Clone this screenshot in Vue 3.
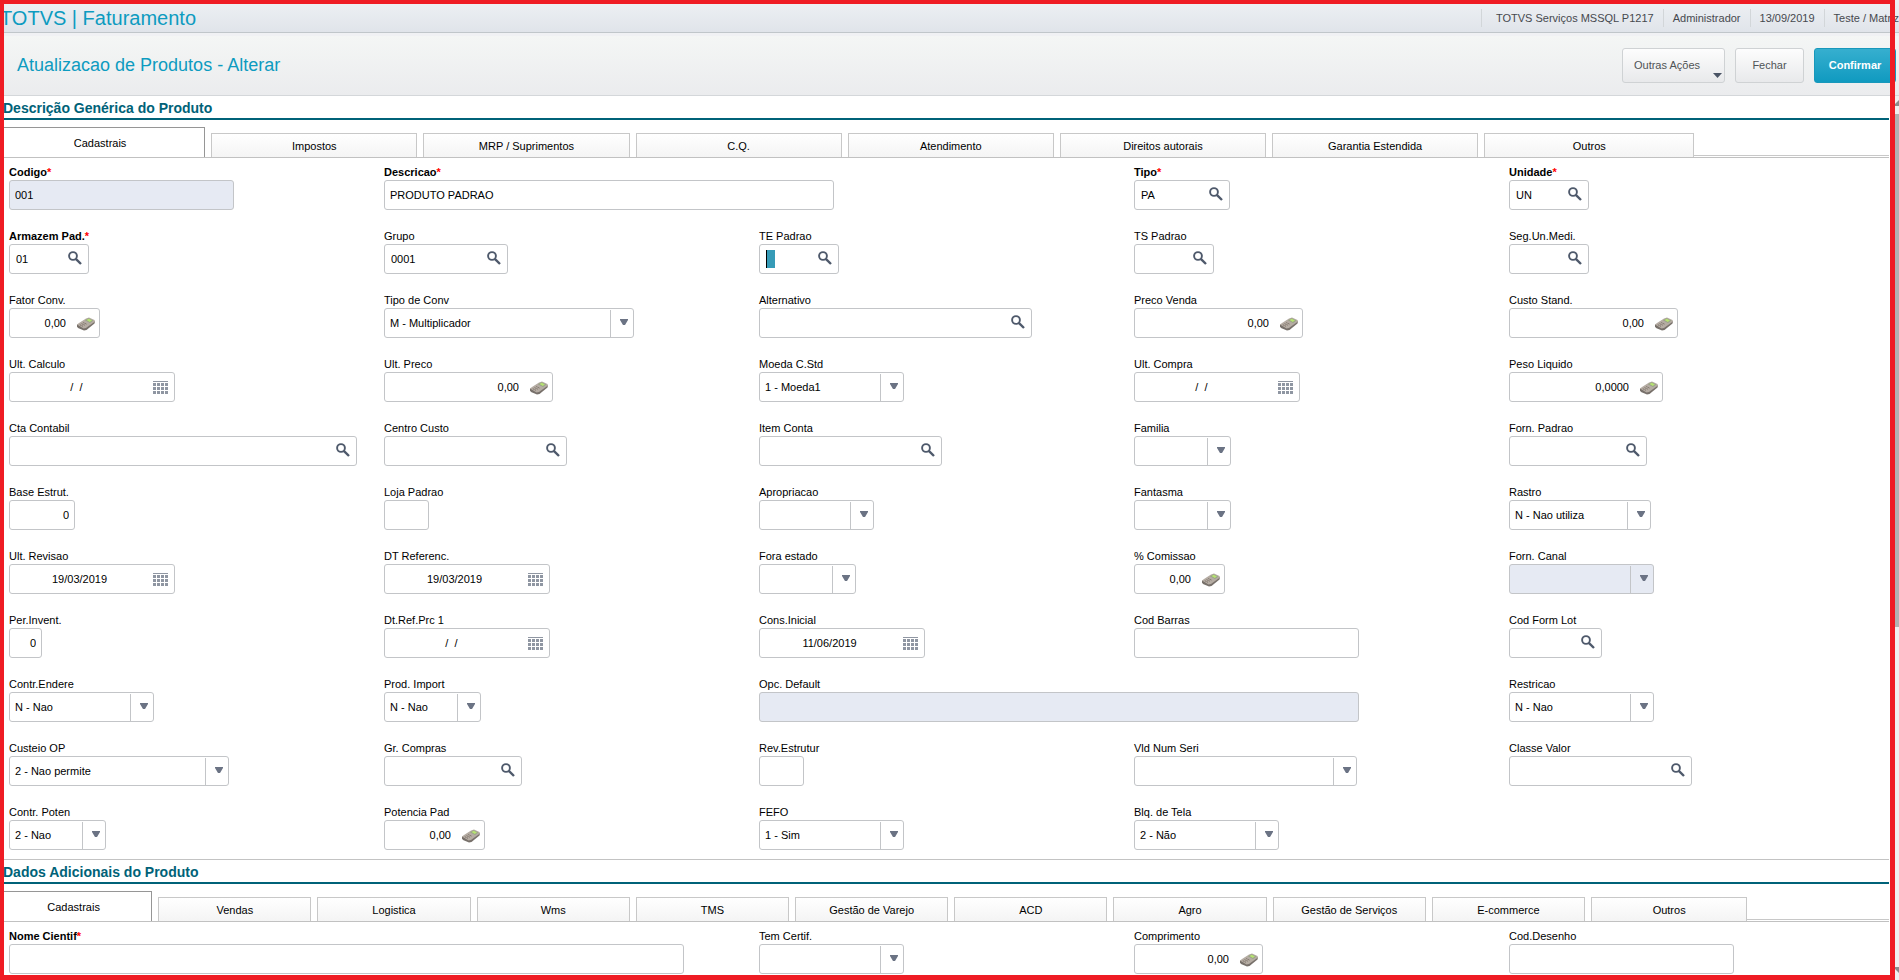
<script setup>
import { ref } from 'vue'

const f = (label, width, kind = 'text', value = '', extra = {}) => ({ label, width, kind, value, ...extra })
const tabs1 = ['Cadastrais', 'Impostos', 'MRP / Suprimentos', 'C.Q.', 'Atendimento', 'Direitos autorais', 'Garantia Estendida', 'Outros']
const tabs2 = ['Cadastrais', 'Vendas', 'Logistica', 'Wms', 'TMS', 'Gestão de Varejo', 'ACD', 'Agro', 'Gestão de Serviços', 'E-commerce', 'Outros']

const req = { required: true }
const emptyDate = '/  /  '
const sections = ref([
  {
    title: 'Descrição Genérica do Produto',
    size: 'wide',
    tabs: tabs1,
    fields: [
      f('Codigo', 225, 'text', '001', { required: true, disabled: true }),
      f('Descricao', 450, 'text', 'PRODUTO PADRAO', { required: true, span: 2 }),
      f('Tipo', 96, 'search', 'PA', req),
      f('Unidade', 80, 'search', 'UN', req),
      f('Armazem Pad.', 80, 'search', '01', req),
      f('Grupo', 124, 'search', '0001'),
      f('TE Padrao', 80, 'search', '', { caret: true }),
      f('TS Padrao', 80, 'search'),
      f('Seg.Un.Medi.', 80, 'search'),
      f('Fator Conv.', 91, 'number', '0,00'),
      f('Tipo de Conv', 250, 'select', 'M - Multiplicador'),
      f('Alternativo', 273, 'search'),
      f('Preco Venda', 169, 'number', '0,00'),
      f('Custo Stand.', 169, 'number', '0,00'),
      f('Ult. Calculo', 166, 'date', emptyDate),
      f('Ult. Preco', 169, 'number', '0,00'),
      f('Moeda C.Std', 145, 'select', '1 - Moeda1'),
      f('Ult. Compra', 166, 'date', emptyDate),
      f('Peso Liquido', 154, 'number', '0,0000'),
      f('Cta Contabil', 348, 'search'),
      f('Centro Custo', 183, 'search'),
      f('Item Conta', 183, 'search'),
      f('Familia', 97, 'select'),
      f('Forn. Padrao', 138, 'search'),
      f('Base Estrut.', 66, 'right', '0'),
      f('Loja Padrao', 45),
      f('Apropriacao', 115, 'select'),
      f('Fantasma', 97, 'select'),
      f('Rastro', 142, 'select', 'N - Nao utiliza'),
      f('Ult. Revisao', 166, 'date', '19/03/2019'),
      f('DT Referenc.', 166, 'date', '19/03/2019'),
      f('Fora estado', 97, 'select'),
      f('% Comissao', 91, 'number', '0,00'),
      f('Forn. Canal', 145, 'select', '', { disabled: true }),
      f('Per.Invent.', 33, 'right', '0'),
      f('Dt.Ref.Prc 1', 166, 'date', emptyDate),
      f('Cons.Inicial', 166, 'date', '11/06/2019'),
      f('Cod Barras', 225),
      f('Cod Form Lot', 93, 'search'),
      f('Contr.Endere', 145, 'select', 'N - Nao'),
      f('Prod. Import', 97, 'select', 'N - Nao'),
      f('Opc. Default', 600, 'text', '', { disabled: true, span: 2 }),
      f('Restricao', 145, 'select', 'N - Nao'),
      f('Custeio OP', 220, 'select', '2 - Nao permite'),
      f('Gr. Compras', 138, 'search'),
      f('Rev.Estrutur', 45),
      f('Vld Num Seri', 223, 'select'),
      f('Classe Valor', 183, 'search'),
      f('Contr. Poten', 97, 'select', '2 - Nao'),
      f('Potencia Pad', 101, 'number', '0,00'),
      f('FEFO', 145, 'select', '1 - Sim'),
      f('Blq. de Tela', 145, 'select', '2 - Não')
    ]
  },
  {
    title: 'Dados Adicionais do Produto',
    size: 'many',
    tabs: tabs2,
    fields: [
      f('Nome Cientif', 675, 'text', '', { required: true, span: 2 }),
      f('Tem Certif.', 145, 'select'),
      f('Comprimento', 129, 'number', '0,00'),
      f('Cod.Desenho', 225)
    ]
  }
])
</script>

<template>
  <div class="window">
    <header class="appbar">
      <div class="brand">TOTVS | Faturamento</div>
      <div class="status">
        <span>TOTVS Serviços MSSQL P1217</span>
        <span>Administrador</span>
        <span>13/09/2019</span>
        <span>Teste / Matriz</span>
      </div>
    </header>
    <div class="toolbar">
      <h1>Atualizacao de Produtos - Alterar</h1>
      <div class="actions">
        <button type="button" class="btn more">Outras Ações
          <svg class="more-arrow" width="9" height="5" viewBox="0 0 9 5"><path d="M0 0h9L4.500 5z" fill="#4a5465" /></svg>
        </button>
        <button type="button" class="btn close">Fechar</button>
        <button type="button" class="btn primary">Confirmar</button>
      </div>
    </div>
    <div class="body">
      <main>
        <section v-for="(s, si) in sections" :key="si">
          <h2>{{ s.title }}</h2>
          <div class="tabrow">
            <div class="tabs" :class="s.size" role="tablist">
              <button v-for="(t, ti) in s.tabs" :key="t" type="button" role="tab" class="tab" :class="{ active: ti === 0 }" :aria-selected="ti === 0">{{ t }}</button>
            </div>
            <div class="filler"></div>
          </div>
          <div class="grid">
            <div v-for="(c, ci) in s.fields" :key="c.label" class="cell" :class="{ two: c.span === 2 }">
              <label :for="`c${si}-${ci}`" :class="{ strong: c.required }">{{ c.label }}<i v-if="c.required">*</i></label>
              <div class="box" :class="[c.kind, { disabled: c.disabled }]" :style="{ width: c.width + 'px' }">
                <select v-if="c.kind === 'select'" :id="`c${si}-${ci}`" :disabled="c.disabled">
                  <option>{{ c.value }}</option>
                </select>
                <input v-else :id="`c${si}-${ci}`" v-model="c.value" type="text" :disabled="c.disabled" :class="{ caret: c.caret }" />
                <span v-if="c.kind === 'select'" class="drop">
                  <svg width="8" height="7" viewBox="0 0 8 7"><path d="M0 0h8v1L5 6H3L0 1z" fill="#6b7384" /></svg>
                </span>
                <svg v-else-if="c.kind === 'search'" class="lens" width="14" height="14" viewBox="0 0 14 14" fill="none">
                  <circle cx="5" cy="5" r="3.900" stroke="#4e596b" stroke-width="1.900" />
                  <path d="M7.800 7.800L13 13" stroke="#4e596b" stroke-width="2.400" />
                </svg>
                <svg v-else-if="c.kind === 'date'" class="cal" width="15" height="13" viewBox="0 0 15 13" fill="#8f96a2">
                  <path d="M0 0h15v1H0zM0 2h3v3H0zM4 2h3v3H4zM8 2h3v3H8zM12 2h3v3h-3zM0 6h3v3H0zM4 6h3v3H4zM8 6h3v3H8zM12 6h3v3h-3zM0 10h3v3H0zM4 10h3v3H4zM8 10h3v3H8zM12 10h3v3h-3z" />
                </svg>
                <svg v-else-if="c.kind === 'number'" class="calc" width="18" height="14" viewBox="0 0 18 14">
                  <path d="M0 7.500v2l1 1.500 6 2.500 2.500-.5L17.500 6.500 18 4z" fill="#77706a" />
                  <path d="M0 7.500L2 6l7-4.500L12 .5l5.500 2.500.5 1.500L9 11l-2.500.5z" fill="#b5aca3" />
                  <path d="M8 3.200L11.500 1.200l4.800 2.300L13 6z" fill="#97a186" />
                  <path d="M9.500 3.100l2.300-1.300 3.200 1.600-2.300 1.500z" fill="#b6e272" />
                  <path d="M2.800 7.700l1.400.7M4.600 8.600l1.400.7M4.500 6.600l1.400.7M6.400 7.500l1.400.7M6.200 5.500l1.400.7M8.100 6.400l1.400.7" stroke="#80756c" stroke-width="1" />
                </svg>
              </div>
            </div>
          </div>
        </section>
      </main>
      <div class="scroll">
        <svg width="12" height="18" viewBox="0 0 12 18"><path d="M0 10L6 4l6 6z" fill="#8c8c8c" /></svg>
        <div class="thumb"></div>
        <svg class="down" width="12" height="18" viewBox="0 0 12 18"><path d="M0 5h12L6 11z" fill="#8c8c8c" /></svg>
      </div>
    </div>
    <div class="frame"></div>
  </div>
</template>

<style>
body {
  margin: 0;
}
</style>

<style scoped>
* {
  box-sizing: border-box;
}
.window {
  position: relative;
  height: 100vh;
  overflow: hidden;
  display: flex;
  flex-direction: column;
  background: #fff;
  color: #000;
  font: 11px/14px 'Liberation Sans', Arial, sans-serif;
}
.frame {
  position: absolute;
  inset: 0 4px 0 0;
  border: solid #ef1c24;
  border-width: 4px 5px 5px 4px;
  pointer-events: none;
}
.appbar {
  flex: none;
  height: 33px;
  display: flex;
  justify-content: space-between;
  align-items: flex-end;
  background: linear-gradient(#eef1f4, #e0e4ea);
  border-bottom: 1px solid #c0c6ca;
}
.brand {
  font-size: 20px;
  line-height: 28px;
  color: #0d9bc0;
}
.status {
  display: flex;
  color: #46494e;
  padding-bottom: 5px;
}
.status span {
  line-height: 18px;
  padding: 0 9px;
  border-left: 1px solid #d2d6d9;
  white-space: nowrap;
}
.status span:first-child {
  padding-left: 14px;
}
.status span:last-child {
  padding-right: 0;
}
.toolbar {
  flex: none;
  height: 63px;
  display: flex;
  justify-content: space-between;
  align-items: center;
  padding: 0 3px 0 17px;
  background: linear-gradient(#f4f6f5, #ebecee);
  border-top: 3px solid #f0f1f4;
  border-bottom: 1px solid #d4d7da;
}
h1 {
  margin: 0;
  padding-bottom: 2px;
  font-size: 18px;
  line-height: 22px;
  font-weight: 400;
  color: #0d9bc0;
}
.actions {
  display: flex;
  gap: 10px;
}
.btn {
  height: 35px;
  padding: 0 0 1px;
  border: 1px solid #cfd2d4;
  border-radius: 3px;
  background: linear-gradient(#fdfdfd, #e8e9eb);
  color: #4f5356;
  font: 11px/14px 'Liberation Sans', Arial, sans-serif;
}
.more {
  position: relative;
  width: 103px;
  padding-right: 13px;
}
.more-arrow {
  position: absolute;
  right: 2px;
  bottom: 4px;
}
.close {
  width: 69px;
}
.primary {
  width: 82px;
  border-color: #1898bb;
  background: linear-gradient(#36afcf, #109ac0);
  color: #fff;
  font-weight: 700;
}
.body {
  flex: 1;
  min-height: 0;
  display: flex;
}
main {
  flex: 1;
  min-width: 0;
  margin-right: 4px;
  overflow: hidden;
}
section + section {
  border-top: 1px solid #c3c3c3;
}
h2 {
  margin: 0;
  height: 24px;
  padding: 4px 0 0 3px;
  border-bottom: 2px solid #006278;
  font-size: 14px;
  line-height: 16px;
  font-weight: 700;
  color: #006278;
}
.tabrow {
  display: flex;
  align-items: flex-end;
  margin-top: 7px;
  border-bottom: 1px solid #c1c1c1;
}
.tabs {
  flex: none;
  display: flex;
  align-items: flex-end;
  gap: 6px;
}
.wide {
  width: 89.7%;
}
.many {
  width: 92.5%;
}
.tab {
  flex: 1 1 0;
  min-width: 0;
  height: 24px;
  padding: 0;
  border: 1px solid #c8c8c8;
  border-bottom: 0;
  background: linear-gradient(#fff, #f4f4f4);
  color: #000;
  font: 11px/14px 'Liberation Sans', Arial, sans-serif;
}
.tab:last-child {
  flex-grow: 1.02;
}
.tab.active {
  height: 30px;
  text-indent: -4px;
  border-left: 0;
  border-color: #969696;
  background: #fff;
}
.filler {
  flex: 1;
  height: 2px;
  border-top: 1px solid #c8c8c8;
}
.grid {
  display: grid;
  grid-template-columns: repeat(5, minmax(0, 1fr));
  row-gap: 18px;
  padding: 6px 5px 9px 9px;
}
.two {
  grid-column: span 2;
}
label {
  display: block;
  height: 16px;
  line-height: 16px;
}
label.strong {
  font-weight: 700;
}
label i {
  color: #f00;
  font-style: normal;
}
.box {
  height: 30px;
  display: flex;
  align-items: center;
  border: 1px solid #c3c5c8;
  border-radius: 3px;
  background: #fff;
}
.box.disabled {
  background: #e6eaf3;
}
input,
select {
  flex: 1;
  min-width: 0;
  width: 0;
  height: 28px;
  margin: 0;
  padding: 0 5px;
  border: 0;
  outline: 0;
  background: transparent;
  color: #000;
  opacity: 1;
  appearance: none;
  font: 11px/14px 'Liberation Sans', Arial, sans-serif;
}
.search input {
  padding-left: 6px;
}
.right input,
.number input {
  text-align: right;
}
.number input {
  padding-right: 11px;
}
.date input {
  text-align: center;
  white-space: pre;
  padding: 0 4px 0 0;
}
.lens {
  flex: none;
  margin: 0 6px 2px 0;
}
.cal {
  flex: none;
  margin: 1px 6px 0 0;
}
.calc {
  flex: none;
  margin: 2px 4px 0 0;
}
.drop {
  flex: none;
  width: 23px;
  height: 27px;
  margin-top: 1px;
  padding: 0 0 2px 4px;
  display: flex;
  align-items: center;
  justify-content: center;
  border-left: 1px solid #c3c5c8;
  pointer-events: none;
}
.caret {
  background: linear-gradient(90deg, #000 1px, #369bb7 1px) 6px 50% / 9px 18px no-repeat;
}
.scroll {
  flex: none;
  width: 6px;
  overflow: hidden;
  display: flex;
  flex-direction: column;
  background: #f0f0f0;
}
.scroll svg {
  flex: none;
}
.thumb {
  height: 58%;
  background: #b2b2b2;
}
.down {
  margin-top: auto;
}
</style>
